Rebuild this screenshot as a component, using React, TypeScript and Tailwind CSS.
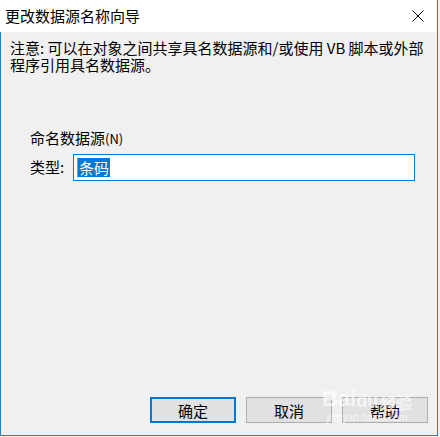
const font = { fontFamily: '"Noto Sans CJK SC", "Noto Sans", sans-serif' };

function CloseIcon() {
  return (
    <svg width="12" height="12" viewBox="0 0 12 12" className="block">
      <path d="M0.5 0.5 L11.5 11.5 M11.5 0.5 L0.5 11.5" stroke="#000" strokeWidth="1" fill="none" />
    </svg>
  );
}

function Btn({ label, focused }: { label: string; focused?: boolean }) {
  return (
    <button
      className={
        'w-[86px] h-[26px] bg-[#e1e1e1] text-[15px] text-black flex items-center justify-center leading-none ' +
        (focused ? 'border-2 border-[#0078d7]' : 'border border-[#adadad]')
      }
    >
      {label}
    </button>
  );
}

export default function App() {
  return (
    <div className="w-[440px] h-[437px] bg-[#f0f0f0] relative" style={font}>
      <div className="w-[438px] h-[436px] flex flex-col border-r border-b border-[#1883d7]">
        <div className="h-[32px] bg-white flex items-center justify-between pl-[5px] pr-[13px]">
          <span className="text-[15px] text-black leading-none -mt-[1px]">更改数据源名称向导</span>
          <CloseIcon />
        </div>
        <div className="flex-1 flex flex-col border-l border-[#1883d7] bg-[#f0f0f0]">
          <p className="pl-[9px] pr-[10px] pt-[7px] text-[15px] leading-[17px] text-black">
            注意: 可以在对象之间共享具名数据源和/或使用 VB 脚本或外部
            <br />
            程序引用具名数据源。
          </p>
          <div className="pl-[29px] mt-[56px] text-[15px] text-black leading-[17px]">
            命名数据源<span className="text-[13px]">(N)</span>
          </div>
          <div className="flex items-center pl-[29px] mt-[7px]">
            <span className="text-[15px] text-black w-[43px]">类型:</span>
            <div className="w-[342px] h-[27px] bg-white border border-[#0078d7] flex items-center pl-[3px]">
              <span className="bg-[#0078d7] text-white text-[15px] leading-[19px] px-[1px] border-l border-[#e5832b]">
                条码
              </span>
            </div>
          </div>
          <div className="flex-1" />
          <div className="flex justify-end gap-[10px] pr-[9px] pb-[12px]">
            <Btn label="确定" focused />
            <Btn label="取消" />
            <Btn label="帮助" />
          </div>
        </div>
      </div>
      <div className="absolute left-[322px] top-[388px] pointer-events-none select-none flex flex-col items-center text-white/70">
        <div className="flex items-end font-bold leading-none" style={{ fontFamily: '"Liberation Sans", sans-serif' }}>
          <span className="text-[22px]">Bai</span>
          <span className="text-[18px]">du</span>
          <span className="text-[16px] ml-[2px]" style={font}>经验</span>
        </div>
        <span className="text-[10px] leading-none mt-[3px]" style={{ fontFamily: '"Liberation Sans", sans-serif' }}>
          jingyan.baidu.com
        </span>
      </div>
    </div>
  );
}
